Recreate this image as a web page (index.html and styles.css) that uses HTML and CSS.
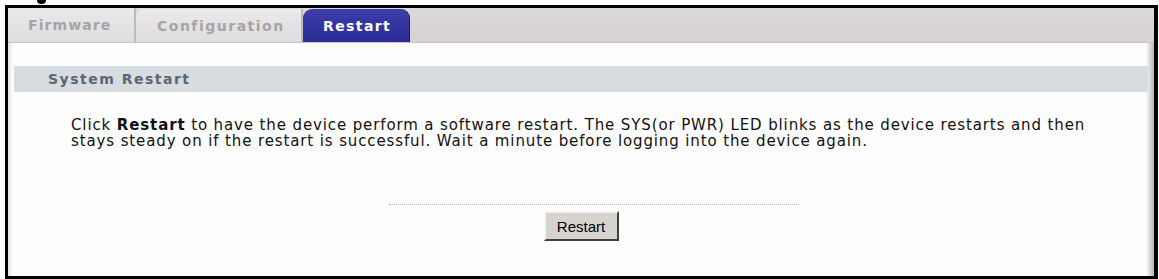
FILE: index.html
```html
<!DOCTYPE html>
<html>
<head>
<meta charset="utf-8">
<link rel="stylesheet" href="styles.css">
</head>
<body>
<div class="caption"><div class="glyph-tail"></div></div>
<div class="frame">
  <div class="tabbar">
    <div class="tab first">Firmware</div>
    <div class="tab second">Configuration</div>
    <div class="tab active">Restart</div>
  </div>
  <div class="content">
    <div class="section-title">System Restart</div>
    <p class="desc">Click <b>Restart</b> to have the device perform a software restart. The SYS(or PWR) LED blinks as the device restarts and then stays steady on if the restart is successful. Wait a minute before logging into the device again.</p>
    <div class="actions">
      <div class="dots"></div>
      <button class="btn">Restart</button>
    </div>
  </div>
</div>
</body>
</html>
```
FILE: styles.css
```css
html, body {
  margin: 0;
  padding: 0;
  background: #fff;
  width: 1159px;
  height: 279px;
  overflow: hidden;
}
.caption {
  height: 5px;
  padding-left: 37px;
  box-sizing: border-box;
}
.glyph-tail {
  width: 5px;
  height: 2px;
  border: 2px solid #000;
  border-top: none;
  border-radius: 0 0 5px 5px;
  background: #000;
}
.frame {
  margin-left: 5px;
  width: 1146px;
  height: 268px;
  border: 3px solid #000;
  border-right-width: 4px;
  background: #fdfdfd;
  display: flex;
  flex-direction: column;
  font-family: "DejaVu Sans", Verdana, sans-serif;
}
.tabbar {
  height: 35px;
  background: linear-gradient(#dcd8dc, #d5d1d5);
  display: flex;
  align-items: flex-end;
  border-bottom: 1px solid #c8c4c8;
  box-sizing: border-box;
}
.tab {
  height: 33px;
  box-sizing: border-box;
  display: flex;
  align-items: center;
  font-weight: bold;
  font-size: 14px;
  letter-spacing: 1.1px;
  color: #a5a5a5;
  background: linear-gradient(#ebe9eb, #dfdcdf);
  border-right: 2px solid #bdb9bd;
}
.tab.first {
  width: 128px;
  padding-left: 20px;
  height: 34px;
}
.tab.second {
  width: 167px;
  padding-left: 21px;
  border-radius: 7px 0 0 0;
  letter-spacing: 1.5px;
}
.tab.active {
  background: linear-gradient(#3c3cab, #2c2c96);
  color: #fff;
  border-right: 1px solid #1c1c70;
  padding-left: 20px;
  width: 107px;
  letter-spacing: 1.4px;
  border-radius: 9px 9px 0 0;
}
.content {
  flex: 1;
  background: linear-gradient(90deg, #e2e2e2 0, #fdfdfd 5px, #fdfdfd calc(100% - 8px), #b5b5b5 100%);
  padding: 23px 6px 0 6px;
  display: flex;
  flex-direction: column;
}
.section-title {
  height: 26px;
  background: #d6dcdf;
  color: #5c6670;
  font-weight: bold;
  font-size: 14px;
  letter-spacing: 1.5px;
  line-height: 26px;
  padding-left: 34px;
}
.desc {
  margin: 25px 0 0 57px;
  font-size: 15px;
  line-height: 16px;
  letter-spacing: 0.88px;
  color: #111;
  width: 1060px;
}
.actions {
  margin-top: 55px;
  display: flex;
  flex-direction: column;
  align-items: center;
}
.dots {
  width: 410px;
  margin-left: 26px;
  border-top: 1px dotted #b5b5b5;
}
.btn {
  margin-top: 6px;
  width: 75px;
  height: 30px;
  font-family: "Liberation Sans", Arial, sans-serif;
  font-size: 15px;
  color: #000;
  background: #d6d3ce;
  border: 2px solid;
  border-color: #f4f4f4 #404040 #404040 #f4f4f4;
}
```
